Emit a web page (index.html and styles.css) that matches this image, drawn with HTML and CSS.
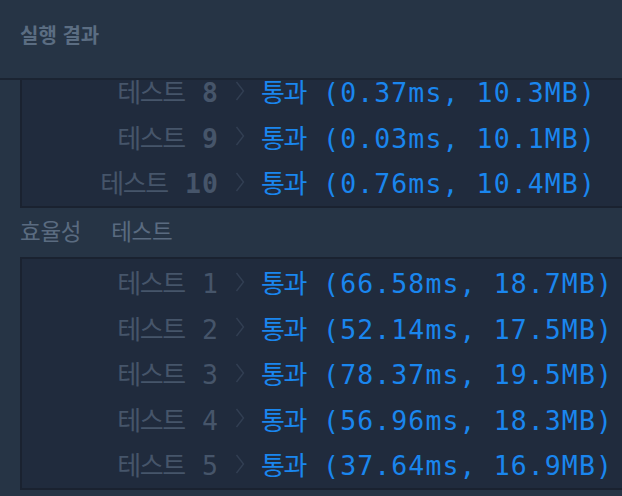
FILE: index.html
```html
<!DOCTYPE html>
<html lang="ko">
<head>
<meta charset="utf-8">
<title>실행 결과</title>
<link rel="stylesheet" href="styles.css">
</head>
<body>
<div class="panel">
  <header class="panel-header">
    <h2 class="panel-title">실행 결과</h2>
  </header>
  <div class="scroll">
    <div class="scroll-inner">
      <div class="box box-first">
        <div class="row"><span class="label"><span class="ko">테스트</span> <b>8</b></span><svg class="chev" viewBox="0 0 10 20"><polyline points="1.5,1 8.5,10 1.5,19"/></svg><span class="result"><span class="ko">통과</span> (0.37ms, 10.3MB)</span></div>
        <div class="row"><span class="label"><span class="ko">테스트</span> <b>9</b></span><svg class="chev" viewBox="0 0 10 20"><polyline points="1.5,1 8.5,10 1.5,19"/></svg><span class="result"><span class="ko">통과</span> (0.03ms, 10.1MB)</span></div>
        <div class="row"><span class="label"><span class="ko">테스트</span> <b>10</b></span><svg class="chev" viewBox="0 0 10 20"><polyline points="1.5,1 8.5,10 1.5,19"/></svg><span class="result"><span class="ko">통과</span> (0.76ms, 10.4MB)</span></div>
      </div>
      <div class="section-label"><span>효율성</span><span>테스트</span></div>
      <div class="box">
        <div class="row"><span class="label"><span class="ko">테스트</span> 1</span><svg class="chev" viewBox="0 0 10 20"><polyline points="1.5,1 8.5,10 1.5,19"/></svg><span class="result"><span class="ko">통과</span> (66.58ms, 18.7MB)</span></div>
        <div class="row"><span class="label"><span class="ko">테스트</span> 2</span><svg class="chev" viewBox="0 0 10 20"><polyline points="1.5,1 8.5,10 1.5,19"/></svg><span class="result"><span class="ko">통과</span> (52.14ms, 17.5MB)</span></div>
        <div class="row"><span class="label"><span class="ko">테스트</span> 3</span><svg class="chev" viewBox="0 0 10 20"><polyline points="1.5,1 8.5,10 1.5,19"/></svg><span class="result"><span class="ko">통과</span> (78.37ms, 19.5MB)</span></div>
        <div class="row"><span class="label"><span class="ko">테스트</span> 4</span><svg class="chev" viewBox="0 0 10 20"><polyline points="1.5,1 8.5,10 1.5,19"/></svg><span class="result"><span class="ko">통과</span> (56.96ms, 18.3MB)</span></div>
        <div class="row"><span class="label"><span class="ko">테스트</span> 5</span><svg class="chev" viewBox="0 0 10 20"><polyline points="1.5,1 8.5,10 1.5,19"/></svg><span class="result"><span class="ko">통과</span> (37.64ms, 16.9MB)</span></div>
      </div>
    </div>
  </div>
</div>
</body>
</html>
```
FILE: styles.css
```css
html, body {
  margin: 0;
  padding: 0;
  background: #263445;
  overflow: hidden;
}
body {
  width: 622px;
  height: 496px;
  font-family: "Noto Sans CJK KR", "Noto Sans", sans-serif;
}
.panel {
  display: flex;
  flex-direction: column;
  height: 496px;
}
.panel-header {
  height: 80px;
  box-sizing: border-box;
  display: flex;
  align-items: center;
  padding: 0 20px 10px;
  background: #263445;
  border-bottom: 2px solid #1b2432;
  flex: none;
}
.panel-title {
  margin: 0;
  font-size: 20px;
  font-weight: 700;
  color: #5b6d82;
  letter-spacing: 0;
}
.scroll {
  flex: 1;
  overflow: hidden;
}
.scroll-inner {
  margin-top: -12px;
}
.box {
  margin-left: 20px;
  margin-right: -40px;
  background: #202b3d;
  border: 2px solid #1a2230;
  padding-bottom: 1px;
}
.box-first {
  border-top: none;
}
.row {
  display: grid;
  grid-template-columns: 197px 42px auto;
  align-items: center;
  height: 45.6px;
  font-family: "DejaVu Sans Mono", "Noto Sans CJK KR", monospace;
  font-size: 26.5px;
  letter-spacing: 1.1px;
  white-space: nowrap;
}
.ko {
  font-family: "Noto Sans CJK KR", sans-serif;
  letter-spacing: -1.4px;
  font-size: 26px;
}
.label {
  text-align: right;
  color: #46556a;
}
.label b {
  font-weight: 700;
}
.chev {
  width: 10px;
  height: 20px;
  justify-self: center;
  fill: none;
  stroke: #323f53;
  stroke-width: 1.4;
}
.result {
  color: #1a86ee;
}
.section-label {
  height: 49px;
  box-sizing: border-box;
  padding: 0 0 4px 20px;
  display: flex;
  align-items: center;
  gap: 30px;
  font-size: 22.5px;
  color: #5a6b80;
  letter-spacing: -0.3px;
}
```
